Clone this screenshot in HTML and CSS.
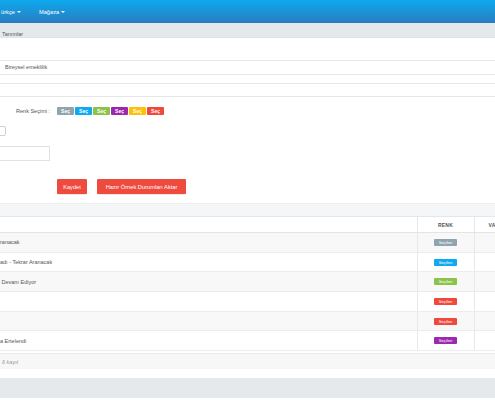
FILE: index.html
```html
<!DOCTYPE html>
<html lang="tr">
<head>
    <meta charset="UTF-8">
    <meta name="viewport" content="width=device-width, initial-scale=1.0">
    <title>Tanımlar</title>
    <link rel="stylesheet" href="styles.css">
</head>
<body>
    <header class="topbar">
        <nav class="menu">
            <a href="#" class="menu-item first">ürkçe <span class="caret"></span></a>
            <a href="#" class="menu-item">Mağaza <span class="caret"></span></a>
        </nav>
    </header>

    <div class="crumb">Tanımlar</div>

    <section class="form-panel">
        <div class="field-stack">
            <div class="field field-main">Bireysel emeklilik</div>
            <div class="field field-thin"></div>
            <div class="field field-mid"></div>
        </div>

        <div class="color-row">
            <span class="color-label">Renk Seçimi :</span>
            <div class="swatches">
                <span class="swatch c-gray">Seç</span>
                <span class="swatch c-blue">Seç</span>
                <span class="swatch c-green">Seç</span>
                <span class="swatch c-purple">Seç</span>
                <span class="swatch c-yellow">Seç</span>
                <span class="swatch c-red">Seç</span>
            </div>
        </div>

        <div class="mini-box"></div>
        <div class="short-input"></div>

        <div class="actions">
            <button class="btn btn-save">Kaydet</button>
            <button class="btn btn-import">Hazır Örnek Durumları Aktar</button>
        </div>
    </section>

    <div class="panel-gap"></div>

    <section class="table-panel">
        <table class="status-table">
            <colgroup>
                <col class="col-name">
                <col class="col-color">
                <col class="col-default">
            </colgroup>
            <thead>
                <tr>
                    <th></th>
                    <th>RENK</th>
                    <th class="th-cut">VA</th>
                </tr>
            </thead>
            <tbody>
                <tr><td>ranacak</td><td><span class="badge c-gray">Seçilen</span></td><td></td></tr>
                <tr><td>adı - Tekrar Aranacak</td><td><span class="badge c-blue">Seçilen</span></td><td></td></tr>
                <tr><td>&nbsp;Devam Ediyor</td><td><span class="badge c-green">Seçilen</span></td><td></td></tr>
                <tr><td></td><td><span class="badge c-red">Seçilen</span></td><td></td></tr>
                <tr><td></td><td><span class="badge c-red">Seçilen</span></td><td></td></tr>
                <tr><td>a Ertelendi</td><td><span class="badge c-purple">Seçilen</span></td><td></td></tr>
            </tbody>
        </table>
        <div class="table-foot">6 kayıt</div>
    </section>

    <footer class="page-foot"></footer>
</body>
</html>
```

FILE: styles.css
```css
* {
    margin: 0;
    padding: 0;
    box-sizing: border-box;
}

html, body {
    width: 495px;
    height: 400px;
    overflow: hidden;
}

body {
    font-family: 'Liberation Sans', Arial, sans-serif;
    font-size: 5.5px;
    color: #555;
    background: #fff;
}

/* top bar */
.topbar {
    height: 23px;
    background: linear-gradient(180deg, #0ea9ee 0%, #2a7dc0 100%);
    display: flex;
    align-items: center;
}

.menu {
    display: flex;
    gap: 18px;
}

.menu-item {
    color: #fff;
    text-decoration: none;
    font-size: 5.7px;
    display: flex;
    align-items: center;
    gap: 2px;
}

.menu-item.first {
    margin-left: 1px;
}

.caret {
    width: 0;
    height: 0;
    border-left: 2px solid transparent;
    border-right: 2px solid transparent;
    border-top: 2px solid #fff;
}

/* breadcrumb */
.crumb {
    height: 15px;
    background: #e6e9ec;
    border-bottom: 1px solid #dfe2e5;
    padding: 8px 0 0 2px;
    line-height: 6px;
    color: #555;
}

/* form panel */
.form-panel {
    background: #fff;
    padding: 22px 0 9px;
    border-bottom: 1px solid #eceef0;
}

.field-stack {
    border-bottom: 1px solid #e6e6e6;
}

.field {
    border-top: 1px solid #e6e6e6;
}

.field-main {
    height: 14px;
    padding-left: 5px;
    line-height: 13px;
    color: #555;
}

.field-thin {
    height: 9px;
}

.field-mid {
    height: 13px;
}

.color-row {
    display: flex;
    align-items: center;
    margin-top: 10px;
    gap: 7px;
}

.color-label {
    width: 50px;
    text-align: right;
    color: #555;
}

.swatches {
    display: flex;
    gap: 1px;
}

.swatch {
    width: 17px;
    height: 8px;
    border-radius: 1px;
    color: #fff;
    font-size: 5px;
    font-weight: bold;
    line-height: 8px;
    text-align: center;
}

.c-gray { background: #90a4ae; }
.c-blue { background: #0fa9f2; }
.c-green { background: #8bc34a; }
.c-purple { background: #9c27b0; }
.c-yellow { background: #ffc107; }
.c-red { background: #f0493c; }

.mini-box {
    width: 10px;
    height: 10px;
    margin: 11px 0 0 -4px;
    border: 1px solid #d0d0d0;
    border-radius: 2px;
}

.short-input {
    width: 60px;
    height: 15px;
    margin: 10px 0 0 -10px;
    border: 1px solid #e2e2e2;
}

.actions {
    display: flex;
    gap: 10px;
    margin: 18px 0 0 57px;
}

.btn {
    height: 15px;
    border: none;
    border-radius: 1px;
    background: #ee4a3e;
    color: #fff;
    font-family: 'Liberation Sans', Arial, sans-serif;
    font-size: 5.7px;
    box-shadow: 0 1px 0 rgba(0, 0, 0, 0.08);
}

.btn-save {
    width: 30px;
}

.btn-import {
    width: 89px;
}

.panel-gap {
    height: 13px;
    background: #f5f6f7;
    border-bottom: 1px solid #e4e6e8;
}

/* table */
.table-panel {
    background: #fff;
}

.status-table {
    width: 534px;
    table-layout: fixed;
    border-collapse: collapse;
}

.col-name { width: 417px; }
.col-color { width: 57px; }
.col-default { width: 60px; }

.status-table th {
    height: 15.5px;
    font-size: 5px;
    font-weight: bold;
    color: #555;
    text-align: center;
    letter-spacing: 0.2px;
    border-bottom: 1px solid #e4e4e4;
}

.status-table th.th-cut {
    text-align: left;
    padding-left: 14px;
}

.status-table th + th,
.status-table td + td {
    border-left: 1px solid #e8e8e8;
}

.status-table td {
    height: 19.7px;
    padding: 0;
    border-bottom: 1px solid #ececec;
    white-space: nowrap;
    overflow: hidden;
    color: #555;
}

.status-table td + td {
    text-align: center;
}

.status-table tbody tr:nth-child(odd) {
    background: #f8f8f9;
}

.badge {
    display: inline-block;
    width: 23px;
    height: 7px;
    border-radius: 1px;
    color: #fff;
    font-size: 4.2px;
    line-height: 7px;
    text-align: center;
    vertical-align: middle;
}

.table-foot {
    margin-top: 2px;
    height: 16px;
    background: #f7f7f7;
    border-top: 1px solid #ebebeb;
    padding-left: 2px;
    line-height: 16px;
    font-style: italic;
    color: #999;
}

.page-foot {
    margin-top: 9px;
    height: 20px;
    background: #e6e9ec;
}
```
